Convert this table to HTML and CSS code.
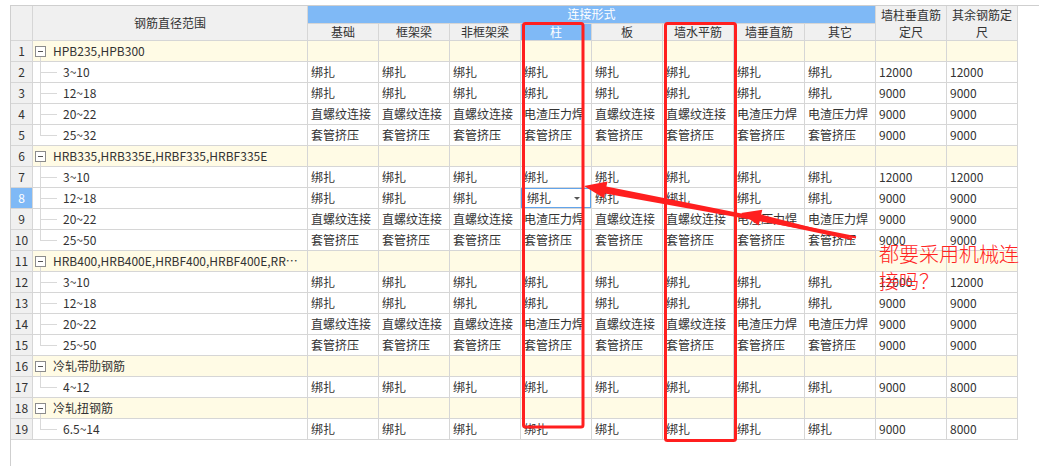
FILE: index.html
```html
<!DOCTYPE html>
<html lang="zh-CN">
<head>
<meta charset="utf-8">
<title>钢筋连接形式</title>
<link rel="stylesheet" href="styles.css">
</head>
<body>
<div class="frame">
<table class="grid">
<colgroup>
<col class="c-n"><col class="c-r">
<col class="c-d"><col class="c-d"><col class="c-d"><col class="c-d"><col class="c-d">
<col class="c-d"><col class="c-d"><col class="c-d"><col class="c-d"><col class="c-d">
</colgroup>
<thead>
<tr class="h">
<th rowspan="2"></th>
<th rowspan="2">钢筋直径范围</th>
<th colspan="8" class="blue">连接形式</th>
<th rowspan="2" class="wrap">墙柱垂直筋定尺</th>
<th rowspan="2" class="wrap">其余钢筋定尺</th>
</tr>
<tr class="h">
<th>基础</th><th>框架梁</th><th>非框架梁</th><th class="blue">柱</th><th>板</th><th>墙水平筋</th><th>墙垂直筋</th><th>其它</th>
</tr>
</thead>
<tbody>
<tr class="g"><td class="n">1</td><td class="r"><div class="rc"><span class="box"></span><span class="gt">HPB235,HPB300</span></div></td><td></td><td></td><td></td><td></td><td></td><td></td><td></td><td></td><td></td><td></td></tr>
<tr><td class="n">2</td><td class="r"><div class="rc"><span class="guide"></span>3~10</div></td><td>绑扎</td><td>绑扎</td><td>绑扎</td><td>绑扎</td><td>绑扎</td><td>绑扎</td><td>绑扎</td><td>绑扎</td><td>12000</td><td>12000</td></tr>
<tr><td class="n">3</td><td class="r"><div class="rc"><span class="guide"></span>12~18</div></td><td>绑扎</td><td>绑扎</td><td>绑扎</td><td>绑扎</td><td>绑扎</td><td>绑扎</td><td>绑扎</td><td>绑扎</td><td>9000</td><td>9000</td></tr>
<tr><td class="n">4</td><td class="r"><div class="rc"><span class="guide"></span>20~22</div></td><td>直螺纹连接</td><td>直螺纹连接</td><td>直螺纹连接</td><td>电渣压力焊</td><td>直螺纹连接</td><td>直螺纹连接</td><td>电渣压力焊</td><td>电渣压力焊</td><td>9000</td><td>9000</td></tr>
<tr><td class="n">5</td><td class="r"><div class="rc"><span class="guide last"></span>25~32</div></td><td>套管挤压</td><td>套管挤压</td><td>套管挤压</td><td>套管挤压</td><td>套管挤压</td><td>套管挤压</td><td>套管挤压</td><td>套管挤压</td><td>9000</td><td>9000</td></tr>
<tr class="g"><td class="n">6</td><td class="r"><div class="rc"><span class="box"></span><span class="gt">HRB335,HRB335E,HRBF335,HRBF335E</span></div></td><td></td><td></td><td></td><td></td><td></td><td></td><td></td><td></td><td></td><td></td></tr>
<tr><td class="n">7</td><td class="r"><div class="rc"><span class="guide"></span>3~10</div></td><td>绑扎</td><td>绑扎</td><td>绑扎</td><td>绑扎</td><td>绑扎</td><td>绑扎</td><td>绑扎</td><td>绑扎</td><td>12000</td><td>12000</td></tr>
<tr><td class="n sel">8</td><td class="r"><div class="rc"><span class="guide"></span>12~18</div></td><td>绑扎</td><td>绑扎</td><td>绑扎</td><td class="selc">绑扎<span class="dd"></span></td><td>绑扎</td><td>绑扎</td><td>绑扎</td><td>绑扎</td><td>9000</td><td>9000</td></tr>
<tr><td class="n">9</td><td class="r"><div class="rc"><span class="guide"></span>20~22</div></td><td>直螺纹连接</td><td>直螺纹连接</td><td>直螺纹连接</td><td>电渣压力焊</td><td>直螺纹连接</td><td>直螺纹连接</td><td>电渣压力焊</td><td>电渣压力焊</td><td>9000</td><td>9000</td></tr>
<tr><td class="n">10</td><td class="r"><div class="rc"><span class="guide last"></span>25~50</div></td><td>套管挤压</td><td>套管挤压</td><td>套管挤压</td><td>套管挤压</td><td>套管挤压</td><td>套管挤压</td><td>套管挤压</td><td>套管挤压</td><td>9000</td><td>9000</td></tr>
<tr class="g"><td class="n">11</td><td class="r"><div class="rc"><span class="box"></span><span class="gt">HRB400,HRB400E,HRBF400,HRBF400E,RRB400</span></div></td><td></td><td></td><td></td><td></td><td></td><td></td><td></td><td></td><td></td><td></td></tr>
<tr><td class="n">12</td><td class="r"><div class="rc"><span class="guide"></span>3~10</div></td><td>绑扎</td><td>绑扎</td><td>绑扎</td><td>绑扎</td><td>绑扎</td><td>绑扎</td><td>绑扎</td><td>绑扎</td><td>12000</td><td>12000</td></tr>
<tr><td class="n">13</td><td class="r"><div class="rc"><span class="guide"></span>12~18</div></td><td>绑扎</td><td>绑扎</td><td>绑扎</td><td>绑扎</td><td>绑扎</td><td>绑扎</td><td>绑扎</td><td>绑扎</td><td>9000</td><td>9000</td></tr>
<tr><td class="n">14</td><td class="r"><div class="rc"><span class="guide"></span>20~22</div></td><td>直螺纹连接</td><td>直螺纹连接</td><td>直螺纹连接</td><td>电渣压力焊</td><td>直螺纹连接</td><td>直螺纹连接</td><td>电渣压力焊</td><td>电渣压力焊</td><td>9000</td><td>9000</td></tr>
<tr><td class="n">15</td><td class="r"><div class="rc"><span class="guide last"></span>25~50</div></td><td>套管挤压</td><td>套管挤压</td><td>套管挤压</td><td>套管挤压</td><td>套管挤压</td><td>套管挤压</td><td>套管挤压</td><td>套管挤压</td><td>9000</td><td>9000</td></tr>
<tr class="g"><td class="n">16</td><td class="r"><div class="rc"><span class="box"></span><span class="gt">冷轧带肋钢筋</span></div></td><td></td><td></td><td></td><td></td><td></td><td></td><td></td><td></td><td></td><td></td></tr>
<tr><td class="n">17</td><td class="r"><div class="rc"><span class="guide last"></span>4~12</div></td><td>绑扎</td><td>绑扎</td><td>绑扎</td><td>绑扎</td><td>绑扎</td><td>绑扎</td><td>绑扎</td><td>绑扎</td><td>9000</td><td>8000</td></tr>
<tr class="g"><td class="n">18</td><td class="r"><div class="rc"><span class="box"></span><span class="gt">冷轧扭钢筋</span></div></td><td></td><td></td><td></td><td></td><td></td><td></td><td></td><td></td><td></td><td></td></tr>
<tr><td class="n">19</td><td class="r"><div class="rc"><span class="guide last"></span>6.5~14</div></td><td>绑扎</td><td>绑扎</td><td>绑扎</td><td>绑扎</td><td>绑扎</td><td>绑扎</td><td>绑扎</td><td>绑扎</td><td>9000</td><td>8000</td></tr>
</tbody>
</table>
</div>

<svg class="marks" width="1039" height="466" viewBox="0 0 1039 466">
  <rect x="523.5" y="23.5" width="59.5" height="403.5" rx="2" fill="none" stroke="#ff1f1f" stroke-width="3"/>
  <rect x="665.5" y="23.5" width="70" height="417" rx="2" fill="none" stroke="#ff1f1f" stroke-width="3"/>
  <polygon fill="#ff1f1f" points="856.2,236.2 606.4,186.6 607.5,181.5 584,186 604.0,198.2 605.0,193.4 855.8,238.6"/>
  <polygon fill="#ff1f1f" points="852.3,238.0 761.2,214.6 762.3,209.7 741,213 758.6,225.4 759.8,220.5 851.7,240.0"/>
</svg>
<div class="note">都要采用机械连接吗？</div>
</body>
</html>
```

FILE: styles.css
```css
html, body {
  margin: 0;
  padding: 0;
  background: #ffffff;
}

body {
  font-family: "Noto Sans CJK SC", "Microsoft YaHei", sans-serif;
  font-size: 12px;
  color: #333333;
  width: 1039px;
  height: 466px;
  overflow: hidden;
}

.frame {
  margin: 5px 0 0 10px;
  border-top: 1px solid #cfcfcf;
  border-left: 1px solid #cfcfcf;
  height: 460px;
}

.grid {
  border-collapse: separate;
  border-spacing: 0;
  table-layout: fixed;
  width: 1007px;
}

.c-n { width: 22px; }
.c-r { width: 275px; }
.c-d { width: 71px; }

.grid th,
.grid td {
  border-right: 1px solid #d6d6d6;
  border-bottom: 1px solid #d6d6d6;
  padding: 0;
  white-space: nowrap;
  overflow: hidden;
}

.grid tr.h { height: 17px; }
.grid tbody tr { height: 21px; }

.grid th {
  background: #f0f0f0;
  font-weight: normal;
  line-height: 16px;
  text-align: center;
  color: #333333;
}

.grid th.wrap {
  white-space: normal;
  line-height: 17px;
}

.grid th.blue {
  background: #7fb9f6;
  color: #ffffff;
}

.grid td {
  line-height: 20px;
  padding-left: 3px;
  text-overflow: clip;
}

.grid td.n {
  background: #f0f0f0;
  text-align: center;
  padding: 0;
}

.grid td.n.sel {
  background: #7fb9f6;
  color: #ffffff;
}

.grid tr.g td {
  background: #fffbe5;
}

.grid tr.g td.n {
  background: #f0f0f0;
}

.grid td.r {
  padding-left: 0;
}

.rc {
  display: flex;
  align-items: center;
  height: 20px;
}

.box {
  flex: none;
  position: relative;
  box-sizing: border-box;
  width: 11px;
  height: 11px;
  margin-left: 2px;
  border: 1px solid #8c8c8c;
  background: #ffffff;
}

.box::before {
  content: "";
  position: absolute;
  left: 2px;
  top: 4px;
  width: 5px;
  height: 1px;
  background: #555555;
}

.box::after {
  content: "";
  position: absolute;
  left: 4px;
  top: 10px;
  width: 1px;
  height: 8px;
  background: #d9d9d9;
}

.gt {
  flex: 1;
  min-width: 0;
  margin-left: 7px;
  margin-right: 4px;
  overflow: hidden;
  text-overflow: ellipsis;
  white-space: nowrap;
}

.guide {
  flex: none;
  position: relative;
  align-self: stretch;
  width: 23px;
  margin-left: 7px;
  height: 21px;
}

.guide::before {
  content: "";
  position: absolute;
  left: 0;
  top: -1px;
  bottom: 0;
  width: 1px;
  background: #d9d9d9;
}

.guide.last::before {
  bottom: 10px;
}

.guide::after {
  content: "";
  position: absolute;
  left: 1px;
  top: 10px;
  width: 16px;
  height: 1px;
  background: #d9d9d9;
}

.grid td.selc {
  position: relative;
  padding-left: 6px;
  background: #ffffff;
  box-shadow: inset 0 0 0 1px #62a4ea;
}

.dd {
  position: absolute;
  right: 11px;
  top: 9px;
  width: 0;
  height: 0;
  border-left: 3px solid transparent;
  border-right: 3px solid transparent;
  border-top: 3px solid #555555;
}

.marks {
  position: absolute;
  left: 0;
  top: 0;
  pointer-events: none;
}

.note {
  position: absolute;
  left: 879px;
  top: 240px;
  width: 150px;
  font-size: 20px;
  line-height: 27px;
  color: #ff2424;
  font-weight: 300;
}
```
